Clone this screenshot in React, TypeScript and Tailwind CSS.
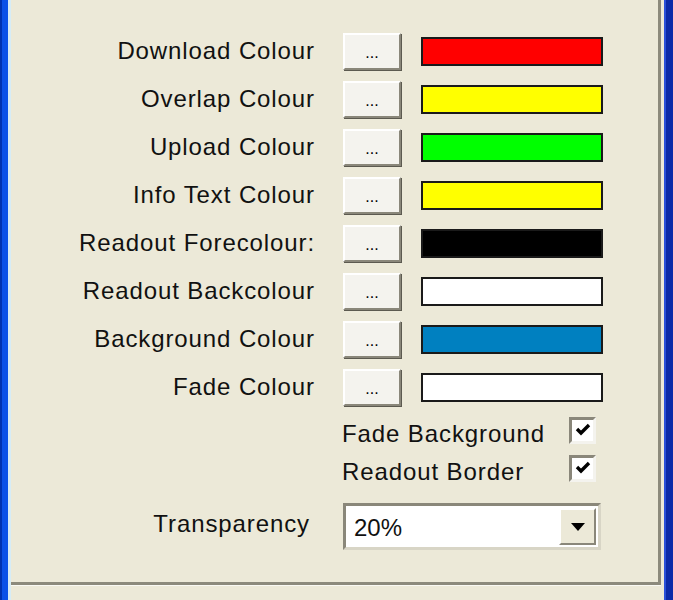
import React from "react";

const colours = [
  { label: "Download Colour", fill: "bg-[#ff0000]" },
  { label: "Overlap Colour", fill: "bg-[#ffff00]" },
  { label: "Upload Colour", fill: "bg-[#00ff00]" },
  { label: "Info Text Colour", fill: "bg-[#ffff00]" },
  { label: "Readout Forecolour:", fill: "bg-[#000000]" },
  { label: "Readout Backcolour", fill: "bg-[#ffffff]" },
  { label: "Background Colour", fill: "bg-[#0080c0]" },
  { label: "Fade Colour", fill: "bg-[#ffffff]" },
];

function PickButton() {
  return (
    <button className="flex h-[37px] w-[58px] items-end justify-center border-[2px] border-t-white border-l-white border-r-[#8a877a] border-b-[#8a877a] bg-[#f4f3ee] pb-[7px] text-[16px] leading-none text-black shadow-[1px_1px_0_#5c5a50]">
      ...
    </button>
  );
}

function CheckBox() {
  return (
    <div className="flex h-[27px] w-[27px] items-center justify-center border-[3px] border-t-[#8a877a] border-l-[#8a877a] border-r-[#f4f3ee] border-b-[#f4f3ee] bg-white">
      <svg width="16" height="14" viewBox="0 0 16 14">
        <path d="M2 6 L6 10 L14 2" fill="none" stroke="#000" strokeWidth="3.4" />
      </svg>
    </div>
  );
}

export default function App() {
  return (
    <div
      className="flex h-[600px] w-[673px] overflow-hidden bg-[#ece9d8] text-[24px] text-[#111]"
      style={{ fontFamily: "Tahoma, 'Liberation Sans', sans-serif" }}
    >
      {/* window frame, left */}
      <div className="w-[8px] shrink-0 border-l-[2px] border-[#0033b0] bg-[#0a52e8]" />
      <div className="w-[3px] shrink-0 bg-[#d6ecf6]" />

      <div className="flex w-[650px] shrink-0 flex-col">
        {/* tab page */}
        <div className="h-[585px] border-r-[3px] border-b-[3px] border-r-[#8c8a7c] border-b-[#8c8a7c] pt-[27px]">
          <div className="grid grid-cols-[304px_28px_58px_20px_182px]">
            {colours.map((c) => (
              <React.Fragment key={c.label}>
                <div className="flex h-[48px] items-center justify-end tracking-[0.9px]">{c.label}</div>
                <div />
                <div className="flex h-[48px] items-center">
                  <PickButton />
                </div>
                <div />
                <div className="flex h-[48px] items-center">
                  <div className={`h-[29px] w-[182px] border-[2px] border-[#1a1a1a] ${c.fill}`} />
                </div>
              </React.Fragment>
            ))}

            {["Fade Background", "Readout Border"].map((t) => (
              <React.Fragment key={t}>
                <div />
                <div />
                <div className="col-span-3 flex h-[38px] items-center justify-between pr-[7px]">
                  <span className="-ml-[1px] pt-[8px] tracking-[0.9px]">{t}</span>
                  <CheckBox />
                </div>
              </React.Fragment>
            ))}

            <div className="mt-[16px] flex h-[47px] items-center justify-end pr-[5px] pb-[6px] tracking-[0.9px]">
              Transparency
            </div>
            <div />
            <div className="col-span-3 mt-[16px] pr-[2px]">
              <div className="flex h-[47px] items-center border-[3px] border-t-[#8a877a] border-l-[#8a877a] border-r-[#d8d5c6] border-b-[#d8d5c6] bg-white pl-[8px] pr-[2px]">
                <span className="flex-1 pt-[2px]">20%</span>
                <div className="flex h-[37px] w-[37px] items-center justify-center border-[2px] border-t-white border-l-white border-r-[#8a877a] border-b-[#8a877a] bg-[#ece9d8]">
                  <svg width="14" height="8" viewBox="0 0 14 8">
                    <path d="M0 0 H14 L7 8 Z" fill="#000" />
                  </svg>
                </div>
              </div>
            </div>
          </div>
        </div>
        <div className="flex-1 border-t border-white/70" />
      </div>

      {/* window frame, right */}
      <div className="w-[3px] shrink-0 bg-[#ece9d8]" />
      <div className="flex-1 border-l-[2px] border-[#2a50d8] bg-[#0b2aa8]" />
    </div>
  );
}
